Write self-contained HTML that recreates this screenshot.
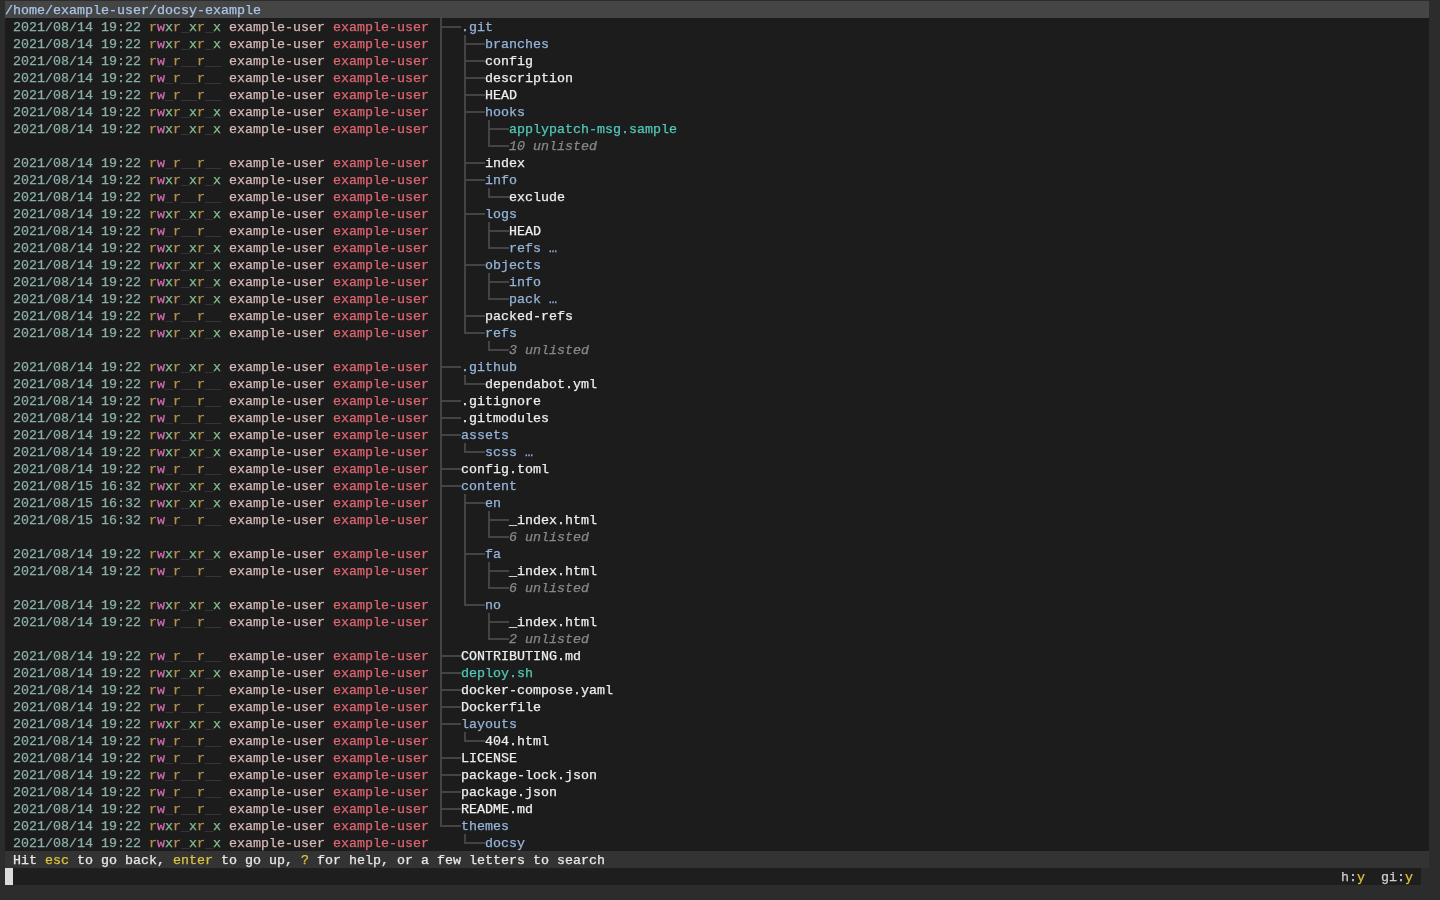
<!DOCTYPE html>
<html><head><meta charset="utf-8"><style>
html,body{margin:0;padding:0;}
body{width:1440px;height:900px;background:#2c2c2c;position:relative;overflow:hidden;font-family:"Liberation Mono",monospace;font-size:13.333px;}
.main{position:absolute;left:5px;top:18px;width:1424px;height:833px;background:#1c1c1c;}
.hdr{position:absolute;left:5px;top:1px;width:1424px;height:17px;background:#454545;}
.stat{position:absolute;left:5px;top:851px;width:1424px;height:17px;background:#333333;}
.inp{position:absolute;left:5px;top:868px;width:1416px;height:17px;background:#1e1e1e;}
.cur{position:absolute;left:5px;top:868px;width:8px;height:17px;background:#dcdcdc;}
.r{position:absolute;left:5px;height:17px;line-height:17px;white-space:pre;color:#e8e8e8;-webkit-text-stroke:0.25px currentColor;}
i{font-style:normal;}
.dt{color:#8aaea8;}
.pr{color:#b4924c;}
.pw{color:#d46cb0;}
.px{color:#84bf92;}
.pn{color:#3c3c3c;}
.ow{color:#d6b8b8;}
.gr{color:#de6670;}
.n.d{color:#94b4da;}
.n.f{color:#eeeeee;}
.n.x{color:#50c8b8;}
.n.u{color:#888888;font-style:italic;}
b{position:absolute;background:#444444;display:block;}
.y{color:#dcc23c;}
</style></head><body><div id="wrap" style="position:absolute;left:0;top:0;width:1440px;height:900px;will-change:transform">
<div class="main"></div>
<div class="hdr"></div>
<div class="stat"></div>
<div class="inp"></div>
<div class="cur"></div>
<div class="r" style="top:2px;color:#a8c4e6">/home/example-user/docsy-example</div>
<div class="r" style="top:19px"> <i class="dt">2021/08/14 19:22</i> <i class="pr">r</i><i class="pw">w</i><i class="px">x</i><i class="pr">r</i><i class="pn">_</i><i class="px">x</i><i class="pr">r</i><i class="pn">_</i><i class="px">x</i> <i class="ow">example-user</i> <i class="gr">example-user</i></div>
<div class="r n d" style="top:19px;left:461px">.git</div>
<div class="r" style="top:36px"> <i class="dt">2021/08/14 19:22</i> <i class="pr">r</i><i class="pw">w</i><i class="px">x</i><i class="pr">r</i><i class="pn">_</i><i class="px">x</i><i class="pr">r</i><i class="pn">_</i><i class="px">x</i> <i class="ow">example-user</i> <i class="gr">example-user</i></div>
<div class="r n d" style="top:36px;left:485px">branches</div>
<div class="r" style="top:53px"> <i class="dt">2021/08/14 19:22</i> <i class="pr">r</i><i class="pw">w</i><i class="pn">_</i><i class="pr">r</i><i class="pn">__</i><i class="pr">r</i><i class="pn">__</i> <i class="ow">example-user</i> <i class="gr">example-user</i></div>
<div class="r n f" style="top:53px;left:485px">config</div>
<div class="r" style="top:70px"> <i class="dt">2021/08/14 19:22</i> <i class="pr">r</i><i class="pw">w</i><i class="pn">_</i><i class="pr">r</i><i class="pn">__</i><i class="pr">r</i><i class="pn">__</i> <i class="ow">example-user</i> <i class="gr">example-user</i></div>
<div class="r n f" style="top:70px;left:485px">description</div>
<div class="r" style="top:87px"> <i class="dt">2021/08/14 19:22</i> <i class="pr">r</i><i class="pw">w</i><i class="pn">_</i><i class="pr">r</i><i class="pn">__</i><i class="pr">r</i><i class="pn">__</i> <i class="ow">example-user</i> <i class="gr">example-user</i></div>
<div class="r n f" style="top:87px;left:485px">HEAD</div>
<div class="r" style="top:104px"> <i class="dt">2021/08/14 19:22</i> <i class="pr">r</i><i class="pw">w</i><i class="px">x</i><i class="pr">r</i><i class="pn">_</i><i class="px">x</i><i class="pr">r</i><i class="pn">_</i><i class="px">x</i> <i class="ow">example-user</i> <i class="gr">example-user</i></div>
<div class="r n d" style="top:104px;left:485px">hooks</div>
<div class="r" style="top:121px"> <i class="dt">2021/08/14 19:22</i> <i class="pr">r</i><i class="pw">w</i><i class="px">x</i><i class="pr">r</i><i class="pn">_</i><i class="px">x</i><i class="pr">r</i><i class="pn">_</i><i class="px">x</i> <i class="ow">example-user</i> <i class="gr">example-user</i></div>
<div class="r n x" style="top:121px;left:509px">applypatch-msg.sample</div>
<div class="r" style="top:138px"></div>
<div class="r n u" style="top:138px;left:509px">10 unlisted</div>
<div class="r" style="top:155px"> <i class="dt">2021/08/14 19:22</i> <i class="pr">r</i><i class="pw">w</i><i class="pn">_</i><i class="pr">r</i><i class="pn">__</i><i class="pr">r</i><i class="pn">__</i> <i class="ow">example-user</i> <i class="gr">example-user</i></div>
<div class="r n f" style="top:155px;left:485px">index</div>
<div class="r" style="top:172px"> <i class="dt">2021/08/14 19:22</i> <i class="pr">r</i><i class="pw">w</i><i class="px">x</i><i class="pr">r</i><i class="pn">_</i><i class="px">x</i><i class="pr">r</i><i class="pn">_</i><i class="px">x</i> <i class="ow">example-user</i> <i class="gr">example-user</i></div>
<div class="r n d" style="top:172px;left:485px">info</div>
<div class="r" style="top:189px"> <i class="dt">2021/08/14 19:22</i> <i class="pr">r</i><i class="pw">w</i><i class="pn">_</i><i class="pr">r</i><i class="pn">__</i><i class="pr">r</i><i class="pn">__</i> <i class="ow">example-user</i> <i class="gr">example-user</i></div>
<div class="r n f" style="top:189px;left:509px">exclude</div>
<div class="r" style="top:206px"> <i class="dt">2021/08/14 19:22</i> <i class="pr">r</i><i class="pw">w</i><i class="px">x</i><i class="pr">r</i><i class="pn">_</i><i class="px">x</i><i class="pr">r</i><i class="pn">_</i><i class="px">x</i> <i class="ow">example-user</i> <i class="gr">example-user</i></div>
<div class="r n d" style="top:206px;left:485px">logs</div>
<div class="r" style="top:223px"> <i class="dt">2021/08/14 19:22</i> <i class="pr">r</i><i class="pw">w</i><i class="pn">_</i><i class="pr">r</i><i class="pn">__</i><i class="pr">r</i><i class="pn">__</i> <i class="ow">example-user</i> <i class="gr">example-user</i></div>
<div class="r n f" style="top:223px;left:509px">HEAD</div>
<div class="r" style="top:240px"> <i class="dt">2021/08/14 19:22</i> <i class="pr">r</i><i class="pw">w</i><i class="px">x</i><i class="pr">r</i><i class="pn">_</i><i class="px">x</i><i class="pr">r</i><i class="pn">_</i><i class="px">x</i> <i class="ow">example-user</i> <i class="gr">example-user</i></div>
<div class="r n d" style="top:240px;left:509px">refs …</div>
<div class="r" style="top:257px"> <i class="dt">2021/08/14 19:22</i> <i class="pr">r</i><i class="pw">w</i><i class="px">x</i><i class="pr">r</i><i class="pn">_</i><i class="px">x</i><i class="pr">r</i><i class="pn">_</i><i class="px">x</i> <i class="ow">example-user</i> <i class="gr">example-user</i></div>
<div class="r n d" style="top:257px;left:485px">objects</div>
<div class="r" style="top:274px"> <i class="dt">2021/08/14 19:22</i> <i class="pr">r</i><i class="pw">w</i><i class="px">x</i><i class="pr">r</i><i class="pn">_</i><i class="px">x</i><i class="pr">r</i><i class="pn">_</i><i class="px">x</i> <i class="ow">example-user</i> <i class="gr">example-user</i></div>
<div class="r n d" style="top:274px;left:509px">info</div>
<div class="r" style="top:291px"> <i class="dt">2021/08/14 19:22</i> <i class="pr">r</i><i class="pw">w</i><i class="px">x</i><i class="pr">r</i><i class="pn">_</i><i class="px">x</i><i class="pr">r</i><i class="pn">_</i><i class="px">x</i> <i class="ow">example-user</i> <i class="gr">example-user</i></div>
<div class="r n d" style="top:291px;left:509px">pack …</div>
<div class="r" style="top:308px"> <i class="dt">2021/08/14 19:22</i> <i class="pr">r</i><i class="pw">w</i><i class="pn">_</i><i class="pr">r</i><i class="pn">__</i><i class="pr">r</i><i class="pn">__</i> <i class="ow">example-user</i> <i class="gr">example-user</i></div>
<div class="r n f" style="top:308px;left:485px">packed-refs</div>
<div class="r" style="top:325px"> <i class="dt">2021/08/14 19:22</i> <i class="pr">r</i><i class="pw">w</i><i class="px">x</i><i class="pr">r</i><i class="pn">_</i><i class="px">x</i><i class="pr">r</i><i class="pn">_</i><i class="px">x</i> <i class="ow">example-user</i> <i class="gr">example-user</i></div>
<div class="r n d" style="top:325px;left:485px">refs</div>
<div class="r" style="top:342px"></div>
<div class="r n u" style="top:342px;left:509px">3 unlisted</div>
<div class="r" style="top:359px"> <i class="dt">2021/08/14 19:22</i> <i class="pr">r</i><i class="pw">w</i><i class="px">x</i><i class="pr">r</i><i class="pn">_</i><i class="px">x</i><i class="pr">r</i><i class="pn">_</i><i class="px">x</i> <i class="ow">example-user</i> <i class="gr">example-user</i></div>
<div class="r n d" style="top:359px;left:461px">.github</div>
<div class="r" style="top:376px"> <i class="dt">2021/08/14 19:22</i> <i class="pr">r</i><i class="pw">w</i><i class="pn">_</i><i class="pr">r</i><i class="pn">__</i><i class="pr">r</i><i class="pn">__</i> <i class="ow">example-user</i> <i class="gr">example-user</i></div>
<div class="r n f" style="top:376px;left:485px">dependabot.yml</div>
<div class="r" style="top:393px"> <i class="dt">2021/08/14 19:22</i> <i class="pr">r</i><i class="pw">w</i><i class="pn">_</i><i class="pr">r</i><i class="pn">__</i><i class="pr">r</i><i class="pn">__</i> <i class="ow">example-user</i> <i class="gr">example-user</i></div>
<div class="r n f" style="top:393px;left:461px">.gitignore</div>
<div class="r" style="top:410px"> <i class="dt">2021/08/14 19:22</i> <i class="pr">r</i><i class="pw">w</i><i class="pn">_</i><i class="pr">r</i><i class="pn">__</i><i class="pr">r</i><i class="pn">__</i> <i class="ow">example-user</i> <i class="gr">example-user</i></div>
<div class="r n f" style="top:410px;left:461px">.gitmodules</div>
<div class="r" style="top:427px"> <i class="dt">2021/08/14 19:22</i> <i class="pr">r</i><i class="pw">w</i><i class="px">x</i><i class="pr">r</i><i class="pn">_</i><i class="px">x</i><i class="pr">r</i><i class="pn">_</i><i class="px">x</i> <i class="ow">example-user</i> <i class="gr">example-user</i></div>
<div class="r n d" style="top:427px;left:461px">assets</div>
<div class="r" style="top:444px"> <i class="dt">2021/08/14 19:22</i> <i class="pr">r</i><i class="pw">w</i><i class="px">x</i><i class="pr">r</i><i class="pn">_</i><i class="px">x</i><i class="pr">r</i><i class="pn">_</i><i class="px">x</i> <i class="ow">example-user</i> <i class="gr">example-user</i></div>
<div class="r n d" style="top:444px;left:485px">scss …</div>
<div class="r" style="top:461px"> <i class="dt">2021/08/14 19:22</i> <i class="pr">r</i><i class="pw">w</i><i class="pn">_</i><i class="pr">r</i><i class="pn">__</i><i class="pr">r</i><i class="pn">__</i> <i class="ow">example-user</i> <i class="gr">example-user</i></div>
<div class="r n f" style="top:461px;left:461px">config.toml</div>
<div class="r" style="top:478px"> <i class="dt">2021/08/15 16:32</i> <i class="pr">r</i><i class="pw">w</i><i class="px">x</i><i class="pr">r</i><i class="pn">_</i><i class="px">x</i><i class="pr">r</i><i class="pn">_</i><i class="px">x</i> <i class="ow">example-user</i> <i class="gr">example-user</i></div>
<div class="r n d" style="top:478px;left:461px">content</div>
<div class="r" style="top:495px"> <i class="dt">2021/08/15 16:32</i> <i class="pr">r</i><i class="pw">w</i><i class="px">x</i><i class="pr">r</i><i class="pn">_</i><i class="px">x</i><i class="pr">r</i><i class="pn">_</i><i class="px">x</i> <i class="ow">example-user</i> <i class="gr">example-user</i></div>
<div class="r n d" style="top:495px;left:485px">en</div>
<div class="r" style="top:512px"> <i class="dt">2021/08/15 16:32</i> <i class="pr">r</i><i class="pw">w</i><i class="pn">_</i><i class="pr">r</i><i class="pn">__</i><i class="pr">r</i><i class="pn">__</i> <i class="ow">example-user</i> <i class="gr">example-user</i></div>
<div class="r n f" style="top:512px;left:509px">_index.html</div>
<div class="r" style="top:529px"></div>
<div class="r n u" style="top:529px;left:509px">6 unlisted</div>
<div class="r" style="top:546px"> <i class="dt">2021/08/14 19:22</i> <i class="pr">r</i><i class="pw">w</i><i class="px">x</i><i class="pr">r</i><i class="pn">_</i><i class="px">x</i><i class="pr">r</i><i class="pn">_</i><i class="px">x</i> <i class="ow">example-user</i> <i class="gr">example-user</i></div>
<div class="r n d" style="top:546px;left:485px">fa</div>
<div class="r" style="top:563px"> <i class="dt">2021/08/14 19:22</i> <i class="pr">r</i><i class="pw">w</i><i class="pn">_</i><i class="pr">r</i><i class="pn">__</i><i class="pr">r</i><i class="pn">__</i> <i class="ow">example-user</i> <i class="gr">example-user</i></div>
<div class="r n f" style="top:563px;left:509px">_index.html</div>
<div class="r" style="top:580px"></div>
<div class="r n u" style="top:580px;left:509px">6 unlisted</div>
<div class="r" style="top:597px"> <i class="dt">2021/08/14 19:22</i> <i class="pr">r</i><i class="pw">w</i><i class="px">x</i><i class="pr">r</i><i class="pn">_</i><i class="px">x</i><i class="pr">r</i><i class="pn">_</i><i class="px">x</i> <i class="ow">example-user</i> <i class="gr">example-user</i></div>
<div class="r n d" style="top:597px;left:485px">no</div>
<div class="r" style="top:614px"> <i class="dt">2021/08/14 19:22</i> <i class="pr">r</i><i class="pw">w</i><i class="pn">_</i><i class="pr">r</i><i class="pn">__</i><i class="pr">r</i><i class="pn">__</i> <i class="ow">example-user</i> <i class="gr">example-user</i></div>
<div class="r n f" style="top:614px;left:509px">_index.html</div>
<div class="r" style="top:631px"></div>
<div class="r n u" style="top:631px;left:509px">2 unlisted</div>
<div class="r" style="top:648px"> <i class="dt">2021/08/14 19:22</i> <i class="pr">r</i><i class="pw">w</i><i class="pn">_</i><i class="pr">r</i><i class="pn">__</i><i class="pr">r</i><i class="pn">__</i> <i class="ow">example-user</i> <i class="gr">example-user</i></div>
<div class="r n f" style="top:648px;left:461px">CONTRIBUTING.md</div>
<div class="r" style="top:665px"> <i class="dt">2021/08/14 19:22</i> <i class="pr">r</i><i class="pw">w</i><i class="px">x</i><i class="pr">r</i><i class="pn">_</i><i class="px">x</i><i class="pr">r</i><i class="pn">_</i><i class="px">x</i> <i class="ow">example-user</i> <i class="gr">example-user</i></div>
<div class="r n x" style="top:665px;left:461px">deploy.sh</div>
<div class="r" style="top:682px"> <i class="dt">2021/08/14 19:22</i> <i class="pr">r</i><i class="pw">w</i><i class="pn">_</i><i class="pr">r</i><i class="pn">__</i><i class="pr">r</i><i class="pn">__</i> <i class="ow">example-user</i> <i class="gr">example-user</i></div>
<div class="r n f" style="top:682px;left:461px">docker-compose.yaml</div>
<div class="r" style="top:699px"> <i class="dt">2021/08/14 19:22</i> <i class="pr">r</i><i class="pw">w</i><i class="pn">_</i><i class="pr">r</i><i class="pn">__</i><i class="pr">r</i><i class="pn">__</i> <i class="ow">example-user</i> <i class="gr">example-user</i></div>
<div class="r n f" style="top:699px;left:461px">Dockerfile</div>
<div class="r" style="top:716px"> <i class="dt">2021/08/14 19:22</i> <i class="pr">r</i><i class="pw">w</i><i class="px">x</i><i class="pr">r</i><i class="pn">_</i><i class="px">x</i><i class="pr">r</i><i class="pn">_</i><i class="px">x</i> <i class="ow">example-user</i> <i class="gr">example-user</i></div>
<div class="r n d" style="top:716px;left:461px">layouts</div>
<div class="r" style="top:733px"> <i class="dt">2021/08/14 19:22</i> <i class="pr">r</i><i class="pw">w</i><i class="pn">_</i><i class="pr">r</i><i class="pn">__</i><i class="pr">r</i><i class="pn">__</i> <i class="ow">example-user</i> <i class="gr">example-user</i></div>
<div class="r n f" style="top:733px;left:485px">404.html</div>
<div class="r" style="top:750px"> <i class="dt">2021/08/14 19:22</i> <i class="pr">r</i><i class="pw">w</i><i class="pn">_</i><i class="pr">r</i><i class="pn">__</i><i class="pr">r</i><i class="pn">__</i> <i class="ow">example-user</i> <i class="gr">example-user</i></div>
<div class="r n f" style="top:750px;left:461px">LICENSE</div>
<div class="r" style="top:767px"> <i class="dt">2021/08/14 19:22</i> <i class="pr">r</i><i class="pw">w</i><i class="pn">_</i><i class="pr">r</i><i class="pn">__</i><i class="pr">r</i><i class="pn">__</i> <i class="ow">example-user</i> <i class="gr">example-user</i></div>
<div class="r n f" style="top:767px;left:461px">package-lock.json</div>
<div class="r" style="top:784px"> <i class="dt">2021/08/14 19:22</i> <i class="pr">r</i><i class="pw">w</i><i class="pn">_</i><i class="pr">r</i><i class="pn">__</i><i class="pr">r</i><i class="pn">__</i> <i class="ow">example-user</i> <i class="gr">example-user</i></div>
<div class="r n f" style="top:784px;left:461px">package.json</div>
<div class="r" style="top:801px"> <i class="dt">2021/08/14 19:22</i> <i class="pr">r</i><i class="pw">w</i><i class="pn">_</i><i class="pr">r</i><i class="pn">__</i><i class="pr">r</i><i class="pn">__</i> <i class="ow">example-user</i> <i class="gr">example-user</i></div>
<div class="r n f" style="top:801px;left:461px">README.md</div>
<div class="r" style="top:818px"> <i class="dt">2021/08/14 19:22</i> <i class="pr">r</i><i class="pw">w</i><i class="px">x</i><i class="pr">r</i><i class="pn">_</i><i class="px">x</i><i class="pr">r</i><i class="pn">_</i><i class="px">x</i> <i class="ow">example-user</i> <i class="gr">example-user</i></div>
<div class="r n d" style="top:818px;left:461px">themes</div>
<div class="r" style="top:835px"> <i class="dt">2021/08/14 19:22</i> <i class="pr">r</i><i class="pw">w</i><i class="px">x</i><i class="pr">r</i><i class="pn">_</i><i class="px">x</i><i class="pr">r</i><i class="pn">_</i><i class="px">x</i> <i class="ow">example-user</i> <i class="gr">example-user</i></div>
<div class="r n d" style="top:835px;left:485px">docsy</div>
<b style="left:440px;top:18px;width:2px;height:17px"></b><b style="left:440px;top:26px;width:21px;height:2px"></b><b style="left:440px;top:35px;width:2px;height:17px"></b><b style="left:464px;top:35px;width:2px;height:17px"></b><b style="left:464px;top:43px;width:21px;height:2px"></b><b style="left:440px;top:52px;width:2px;height:17px"></b><b style="left:464px;top:52px;width:2px;height:17px"></b><b style="left:464px;top:60px;width:21px;height:2px"></b><b style="left:440px;top:69px;width:2px;height:17px"></b><b style="left:464px;top:69px;width:2px;height:17px"></b><b style="left:464px;top:77px;width:21px;height:2px"></b><b style="left:440px;top:86px;width:2px;height:17px"></b><b style="left:464px;top:86px;width:2px;height:17px"></b><b style="left:464px;top:94px;width:21px;height:2px"></b><b style="left:440px;top:103px;width:2px;height:17px"></b><b style="left:464px;top:103px;width:2px;height:17px"></b><b style="left:464px;top:111px;width:21px;height:2px"></b><b style="left:440px;top:120px;width:2px;height:17px"></b><b style="left:464px;top:120px;width:2px;height:17px"></b><b style="left:488px;top:120px;width:2px;height:17px"></b><b style="left:488px;top:128px;width:21px;height:2px"></b><b style="left:440px;top:137px;width:2px;height:17px"></b><b style="left:464px;top:137px;width:2px;height:17px"></b><b style="left:488px;top:137px;width:2px;height:10px"></b><b style="left:488px;top:145px;width:21px;height:2px"></b><b style="left:440px;top:154px;width:2px;height:17px"></b><b style="left:464px;top:154px;width:2px;height:17px"></b><b style="left:464px;top:162px;width:21px;height:2px"></b><b style="left:440px;top:171px;width:2px;height:17px"></b><b style="left:464px;top:171px;width:2px;height:17px"></b><b style="left:464px;top:179px;width:21px;height:2px"></b><b style="left:440px;top:188px;width:2px;height:17px"></b><b style="left:464px;top:188px;width:2px;height:17px"></b><b style="left:488px;top:188px;width:2px;height:10px"></b><b style="left:488px;top:196px;width:21px;height:2px"></b><b style="left:440px;top:205px;width:2px;height:17px"></b><b style="left:464px;top:205px;width:2px;height:17px"></b><b style="left:464px;top:213px;width:21px;height:2px"></b><b style="left:440px;top:222px;width:2px;height:17px"></b><b style="left:464px;top:222px;width:2px;height:17px"></b><b style="left:488px;top:222px;width:2px;height:17px"></b><b style="left:488px;top:230px;width:21px;height:2px"></b><b style="left:440px;top:239px;width:2px;height:17px"></b><b style="left:464px;top:239px;width:2px;height:17px"></b><b style="left:488px;top:239px;width:2px;height:10px"></b><b style="left:488px;top:247px;width:21px;height:2px"></b><b style="left:440px;top:256px;width:2px;height:17px"></b><b style="left:464px;top:256px;width:2px;height:17px"></b><b style="left:464px;top:264px;width:21px;height:2px"></b><b style="left:440px;top:273px;width:2px;height:17px"></b><b style="left:464px;top:273px;width:2px;height:17px"></b><b style="left:488px;top:273px;width:2px;height:17px"></b><b style="left:488px;top:281px;width:21px;height:2px"></b><b style="left:440px;top:290px;width:2px;height:17px"></b><b style="left:464px;top:290px;width:2px;height:17px"></b><b style="left:488px;top:290px;width:2px;height:10px"></b><b style="left:488px;top:298px;width:21px;height:2px"></b><b style="left:440px;top:307px;width:2px;height:17px"></b><b style="left:464px;top:307px;width:2px;height:17px"></b><b style="left:464px;top:315px;width:21px;height:2px"></b><b style="left:440px;top:324px;width:2px;height:17px"></b><b style="left:464px;top:324px;width:2px;height:10px"></b><b style="left:464px;top:332px;width:21px;height:2px"></b><b style="left:440px;top:341px;width:2px;height:17px"></b><b style="left:488px;top:341px;width:2px;height:10px"></b><b style="left:488px;top:349px;width:21px;height:2px"></b><b style="left:440px;top:358px;width:2px;height:17px"></b><b style="left:440px;top:366px;width:21px;height:2px"></b><b style="left:440px;top:375px;width:2px;height:17px"></b><b style="left:464px;top:375px;width:2px;height:10px"></b><b style="left:464px;top:383px;width:21px;height:2px"></b><b style="left:440px;top:392px;width:2px;height:17px"></b><b style="left:440px;top:400px;width:21px;height:2px"></b><b style="left:440px;top:409px;width:2px;height:17px"></b><b style="left:440px;top:417px;width:21px;height:2px"></b><b style="left:440px;top:426px;width:2px;height:17px"></b><b style="left:440px;top:434px;width:21px;height:2px"></b><b style="left:440px;top:443px;width:2px;height:17px"></b><b style="left:464px;top:443px;width:2px;height:10px"></b><b style="left:464px;top:451px;width:21px;height:2px"></b><b style="left:440px;top:460px;width:2px;height:17px"></b><b style="left:440px;top:468px;width:21px;height:2px"></b><b style="left:440px;top:477px;width:2px;height:17px"></b><b style="left:440px;top:485px;width:21px;height:2px"></b><b style="left:440px;top:494px;width:2px;height:17px"></b><b style="left:464px;top:494px;width:2px;height:17px"></b><b style="left:464px;top:502px;width:21px;height:2px"></b><b style="left:440px;top:511px;width:2px;height:17px"></b><b style="left:464px;top:511px;width:2px;height:17px"></b><b style="left:488px;top:511px;width:2px;height:17px"></b><b style="left:488px;top:519px;width:21px;height:2px"></b><b style="left:440px;top:528px;width:2px;height:17px"></b><b style="left:464px;top:528px;width:2px;height:17px"></b><b style="left:488px;top:528px;width:2px;height:10px"></b><b style="left:488px;top:536px;width:21px;height:2px"></b><b style="left:440px;top:545px;width:2px;height:17px"></b><b style="left:464px;top:545px;width:2px;height:17px"></b><b style="left:464px;top:553px;width:21px;height:2px"></b><b style="left:440px;top:562px;width:2px;height:17px"></b><b style="left:464px;top:562px;width:2px;height:17px"></b><b style="left:488px;top:562px;width:2px;height:17px"></b><b style="left:488px;top:570px;width:21px;height:2px"></b><b style="left:440px;top:579px;width:2px;height:17px"></b><b style="left:464px;top:579px;width:2px;height:17px"></b><b style="left:488px;top:579px;width:2px;height:10px"></b><b style="left:488px;top:587px;width:21px;height:2px"></b><b style="left:440px;top:596px;width:2px;height:17px"></b><b style="left:464px;top:596px;width:2px;height:10px"></b><b style="left:464px;top:604px;width:21px;height:2px"></b><b style="left:440px;top:613px;width:2px;height:17px"></b><b style="left:488px;top:613px;width:2px;height:17px"></b><b style="left:488px;top:621px;width:21px;height:2px"></b><b style="left:440px;top:630px;width:2px;height:17px"></b><b style="left:488px;top:630px;width:2px;height:10px"></b><b style="left:488px;top:638px;width:21px;height:2px"></b><b style="left:440px;top:647px;width:2px;height:17px"></b><b style="left:440px;top:655px;width:21px;height:2px"></b><b style="left:440px;top:664px;width:2px;height:17px"></b><b style="left:440px;top:672px;width:21px;height:2px"></b><b style="left:440px;top:681px;width:2px;height:17px"></b><b style="left:440px;top:689px;width:21px;height:2px"></b><b style="left:440px;top:698px;width:2px;height:17px"></b><b style="left:440px;top:706px;width:21px;height:2px"></b><b style="left:440px;top:715px;width:2px;height:17px"></b><b style="left:440px;top:723px;width:21px;height:2px"></b><b style="left:440px;top:732px;width:2px;height:17px"></b><b style="left:464px;top:732px;width:2px;height:10px"></b><b style="left:464px;top:740px;width:21px;height:2px"></b><b style="left:440px;top:749px;width:2px;height:17px"></b><b style="left:440px;top:757px;width:21px;height:2px"></b><b style="left:440px;top:766px;width:2px;height:17px"></b><b style="left:440px;top:774px;width:21px;height:2px"></b><b style="left:440px;top:783px;width:2px;height:17px"></b><b style="left:440px;top:791px;width:21px;height:2px"></b><b style="left:440px;top:800px;width:2px;height:17px"></b><b style="left:440px;top:808px;width:21px;height:2px"></b><b style="left:440px;top:817px;width:2px;height:10px"></b><b style="left:440px;top:825px;width:21px;height:2px"></b><b style="left:464px;top:834px;width:2px;height:10px"></b><b style="left:464px;top:842px;width:21px;height:2px"></b>
<div class="r" style="top:852px"> Hit <i class="y">esc</i> to go back, <i class="y">enter</i> to go up, <i class="y">?</i> for help, or a few letters to search</div>
<div class="r" style="top:869px;left:1341px;color:#cfcfcf">h:<i class="y">y</i>  gi:<i class="y">y</i></div>
</div></body></html>
